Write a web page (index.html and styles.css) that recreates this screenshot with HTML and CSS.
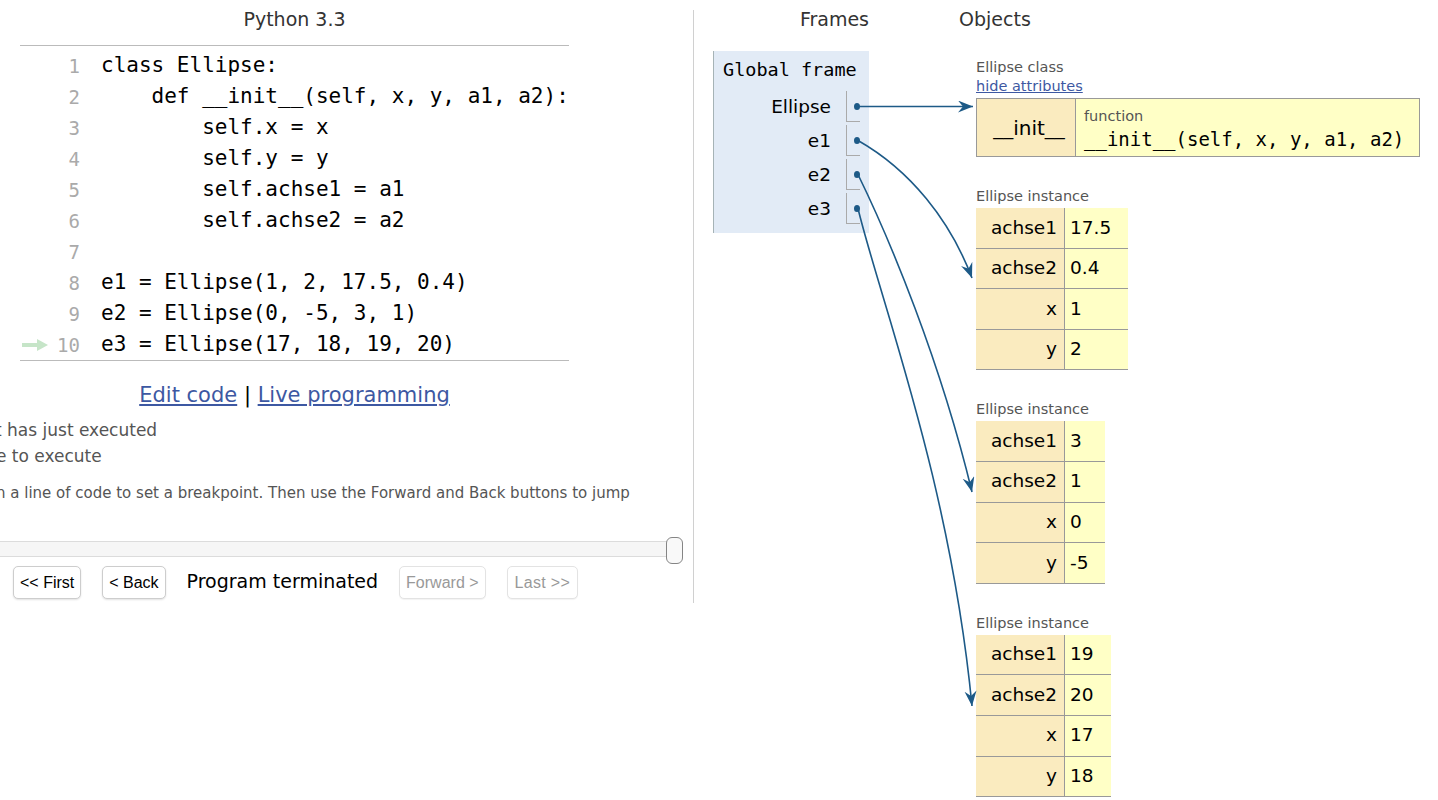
FILE: index.html
```html
<!DOCTYPE html>
<html>
<head>
<meta charset="utf-8">
<title>Python Tutor</title>
<link rel="stylesheet" href="styles.css">
</head>
<body>
<div class="page">
  <div class="left">
    <div class="lang">Python 3.3</div>
    <div class="code">
      <div class="line"><div class="gutter"><span class="ln">1</span></div><pre class="src">class Ellipse:</pre></div>
      <div class="line"><div class="gutter"><span class="ln">2</span></div><pre class="src">    def __init__(self, x, y, a1, a2):</pre></div>
      <div class="line"><div class="gutter"><span class="ln">3</span></div><pre class="src">        self.x = x</pre></div>
      <div class="line"><div class="gutter"><span class="ln">4</span></div><pre class="src">        self.y = y</pre></div>
      <div class="line"><div class="gutter"><span class="ln">5</span></div><pre class="src">        self.achse1 = a1</pre></div>
      <div class="line"><div class="gutter"><span class="ln">6</span></div><pre class="src">        self.achse2 = a2</pre></div>
      <div class="line"><div class="gutter"><span class="ln">7</span></div><pre class="src"> </pre></div>
      <div class="line"><div class="gutter"><span class="ln">8</span></div><pre class="src">e1 = Ellipse(1, 2, 17.5, 0.4)</pre></div>
      <div class="line"><div class="gutter"><span class="ln">9</span></div><pre class="src">e2 = Ellipse(0, -5, 3, 1)</pre></div>
      <div class="line"><div class="gutter"><svg class="curarrow" width="26" height="12" viewBox="0 0 26 12"><rect x="0" y="4" width="16" height="4" fill="#c6e5c8"/><path d="M15 0 L26 6 L15 12 Z" fill="#c6e5c8"/></svg><span class="ln">10</span></div><pre class="src">e3 = Ellipse(17, 18, 19, 20)</pre></div>
    </div>
    <div class="editlinks"><a href="#">Edit code</a> | <a href="#">Live programming</a></div>
    <div class="legend">
      <div class="leg1">t has just executed</div>
      <div class="leg2">e to execute</div>
    </div>
    <div class="hint">n a line of code to set a breakpoint. Then use the Forward and Back buttons to jump</div>
    <div class="slider"><div class="track"></div><div class="handle"></div></div>
    <div class="controls">
      <button class="btn">&lt;&lt; First</button>
      <button class="btn">&lt; Back</button>
      <span class="status">Program terminated</span>
      <button class="btn dis">Forward &gt;</button>
      <button class="btn dis last">Last &gt;&gt;</button>
    </div>
  </div>
  <div class="right">
    <div class="stack">
      <div class="hdr hdr-r">Frames</div>
      <div class="frame">
        <div class="fname">Global frame</div>
        <div class="vars">
          <div class="var"><span class="vname">Ellipse</span><span class="vcell"><span class="dot"></span></span></div>
          <div class="var"><span class="vname">e1</span><span class="vcell"><span class="dot"></span></span></div>
          <div class="var"><span class="vname">e2</span><span class="vcell"><span class="dot"></span></span></div>
          <div class="var"><span class="vname">e3</span><span class="vcell"><span class="dot"></span></span></div>
        </div>
      </div>
    </div>
    <div class="heap">
      <div class="hdr">Objects</div>
      <div class="objs">
        <div class="obj">
          <div class="olabel">Ellipse class</div>
          <a class="hide" href="#">hide attributes</a>
          <div class="cls">
            <div class="ckey">__init__</div>
            <div class="cval"><div class="ftype">function</div><div class="fsig">__init__(self, x, y, a1, a2)</div></div>
          </div>
        </div>
        <div class="obj inst">
          <div class="olabel">Ellipse instance</div>
          <table class="itbl">
            <tr><td class="ik">achse1</td><td class="iv">17.5</td></tr>
            <tr><td class="ik">achse2</td><td class="iv">0.4</td></tr>
            <tr><td class="ik">x</td><td class="iv">1</td></tr>
            <tr><td class="ik">y</td><td class="iv">2</td></tr>
          </table>
        </div>
        <div class="obj inst">
          <div class="olabel">Ellipse instance</div>
          <table class="itbl">
            <tr><td class="ik">achse1</td><td class="iv">3</td></tr>
            <tr><td class="ik">achse2</td><td class="iv">1</td></tr>
            <tr><td class="ik">x</td><td class="iv">0</td></tr>
            <tr><td class="ik">y</td><td class="iv">-5</td></tr>
          </table>
        </div>
        <div class="obj inst">
          <div class="olabel">Ellipse instance</div>
          <table class="itbl">
            <tr><td class="ik">achse1</td><td class="iv">19</td></tr>
            <tr><td class="ik">achse2</td><td class="iv">20</td></tr>
            <tr><td class="ik">x</td><td class="iv">17</td></tr>
            <tr><td class="ik">y</td><td class="iv">18</td></tr>
          </table>
        </div>
      </div>
    </div>
  </div>
</div>
<svg class="arrows" width="1438" height="800" viewBox="0 0 1438 800">
  <defs>
    <marker id="ah" markerUnits="userSpaceOnUse" markerWidth="16" markerHeight="14" refX="15" refY="6" orient="auto">
      <path d="M0,0 L15,6 L0,12 L5,6 Z" fill="#1d5a87"/>
    </marker>
  </defs>
  <g fill="none" stroke="#1d5a87" stroke-width="1.6">
    <path d="M858,106.5 L973,106.5" marker-end="url(#ah)"/>
    <path d="M858,140.5 C910,170 950,220 972,278" marker-end="url(#ah)"/>
    <path d="M858,174.5 C890,240 940,360 972,492" marker-end="url(#ah)"/>
    <path d="M858,208.5 C880,300 950,480 972,706" marker-end="url(#ah)"/>
  </g>
</svg>
</body>
</html>
```

FILE: styles.css
```css
html, body {
  margin: 0;
  padding: 0;
  background: #fff;
}
body {
  position: relative;
  width: 1438px;
  height: 800px;
  overflow: hidden;
  font-family: "DejaVu Sans", Verdana, sans-serif;
  color: #000;
}
.page {
  display: flex;
  align-items: flex-start;
}

/* ---------- left pane ---------- */
.left {
  flex: none;
  width: 693px;
  height: 593px;
  margin-top: 10px;
  border-right: 1px solid #d0d0d0;
}
.lang {
  margin-left: 20px;
  width: 549px;
  text-align: center;
  font-size: 19px;
  line-height: 18px;
  color: #333;
}
.code {
  margin: 17px 0 0 20px;
  width: 549px;
  border-top: 1px solid #bbb;
  border-bottom: 1px solid #bbb;
  padding-top: 4px;
}
.line {
  display: flex;
  align-items: center;
  height: 31px;
}
.gutter {
  flex: none;
  width: 60px;
  display: flex;
  align-items: center;
}
.curarrow {
  margin-left: 2px;
}
.ln {
  margin-left: auto;
  font-family: "DejaVu Sans Mono", monospace;
  font-size: 19px;
  color: #aaa;
}
.src {
  margin: 0 0 0 21px;
  font-family: "DejaVu Sans Mono", monospace;
  font-size: 21px;
  line-height: 31px;
  white-space: pre;
  color: #000;
}
.editlinks {
  margin: 22px 0 0 20px;
  width: 549px;
  text-align: center;
  font-size: 21px;
  line-height: 24px;
}
.editlinks a {
  color: #3d58a2;
  text-decoration: underline;
}
.legend {
  margin-top: 10px;
  font-size: 17px;
  line-height: 26px;
  color: #555;
}
.leg1 { margin-left: -5px; }
.leg2 { margin-left: -4px; }
.hint {
  margin: 14px 0 0 -4px;
  font-size: 15px;
  line-height: 20px;
  color: #555;
  white-space: nowrap;
}
.slider {
  position: relative;
  margin: 34px 0 0 -20px;
  width: 703px;
  height: 27px;
}
.track {
  box-sizing: border-box;
  position: relative;
  top: 4px;
  width: 695px;
  height: 16px;
  border: 1px solid #dcdcdc;
  background: #f6f6f6;
}
.handle {
  position: absolute;
  right: 0;
  top: 0;
  box-sizing: border-box;
  width: 17px;
  height: 27px;
  border: 1.5px solid #858585;
  border-radius: 6px;
  background: #f9f9f9;
}
.controls {
  display: flex;
  align-items: center;
  gap: 21px;
  margin: 2px 0 0 13px;
}
.btn {
  box-sizing: border-box;
  height: 33px;
  padding: 0 6px;
  font-family: "Liberation Sans", Arial, sans-serif;
  font-size: 16px;
  color: #000;
  background: #fff;
  border: 1px solid #cdcdcd;
  border-radius: 5px;
  box-shadow: 0 1px 2px rgba(0,0,0,0.12);
}
.btn.dis {
  color: #999;
  border-color: #e3e3e3;
  box-shadow: 0 1px 1px rgba(0,0,0,0.05);
}
.btn.last {
  padding: 0 7px;
  letter-spacing: 0.3px;
}
.status {
  font-size: 19px;
  line-height: 24px;
  margin-top: -3px;
}

/* ---------- right pane ---------- */
.right {
  display: flex;
  align-items: flex-start;
}
.hdr {
  margin-top: 7px;
  font-size: 19px;
  line-height: 24px;
  color: #333;
}
.hdr-r {
  text-align: right;
}
.stack {
  flex: none;
  margin-left: 19px;
  width: 156px;
}
.frame {
  box-sizing: border-box;
  margin-top: 20px;
  width: 156px;
  background: #e2ebf6;
  border-left: 1px solid #a6b3b6;
  padding: 8px 9px 9px 9px;
}
.fname {
  font-family: "DejaVu Sans Mono", monospace;
  font-size: 18.5px;
  line-height: 22px;
}
.vars {
  margin-top: 10px;
  display: flex;
  flex-direction: column;
  gap: 3px;
}
.var {
  display: flex;
  justify-content: flex-end;
  height: 31px;
}
.vname {
  font-size: 18.5px;
  line-height: 31px;
  margin-right: 15px;
}
.vcell {
  box-sizing: border-box;
  width: 14px;
  height: 31px;
  border-left: 1px solid #aaa;
  border-bottom: 1px solid #aaa;
  display: flex;
  align-items: center;
}
.dot {
  width: 7px;
  height: 7px;
  margin-left: 7px;
  border-radius: 50%;
  background: #1d5a87;
}

.heap {
  margin-left: 90px;
}
.objs {
  margin: 27px 0 0 17px;
}
.obj.inst {
  margin-top: 30px;
}
.olabel {
  font-size: 14.5px;
  line-height: 18px;
  color: #555;
}
.hide {
  display: inline-block;
  font-size: 14.5px;
  line-height: 18px;
  color: #3d58a2;
  text-decoration: underline;
}
.cls {
  margin-top: 3px;
  display: inline-flex;
  border: 1px solid #999;
}
.ckey {
  width: 99px;
  flex: none;
  box-sizing: border-box;
  background: #faebbf;
  border-right: 1px solid #999;
  display: flex;
  align-items: center;
  justify-content: center;
  padding-left: 6px;
  font-size: 20px;
}
.cval {
  flex: none;
  background: #ffffc6;
  padding: 8px 15px 5px 8px;
  white-space: nowrap;
}
.ftype {
  font-size: 14.5px;
  line-height: 18px;
  color: #555;
}
.fsig {
  margin-top: 2px;
  font-family: "DejaVu Sans Mono", monospace;
  font-size: 19px;
  line-height: 24px;
}
.itbl {
  margin-top: 3px;
  border-collapse: collapse;
  border-spacing: 0;
}
.itbl td {
  font-size: 18.5px;
  line-height: 22.6px;
  padding-top: 8.5px;
  padding-bottom: 8.5px;
  border-bottom: 1px solid #999;
}
.ik {
  background: #faebbf;
  text-align: right;
  padding-left: 15px;
  padding-right: 7px;
}
.iv {
  background: #ffffc6;
  text-align: left;
  padding-left: 5px;
  padding-right: 17px;
  border-left: 1px solid #999;
}

.arrows {
  position: absolute;
  left: 0;
  top: 0;
  pointer-events: none;
}
```
